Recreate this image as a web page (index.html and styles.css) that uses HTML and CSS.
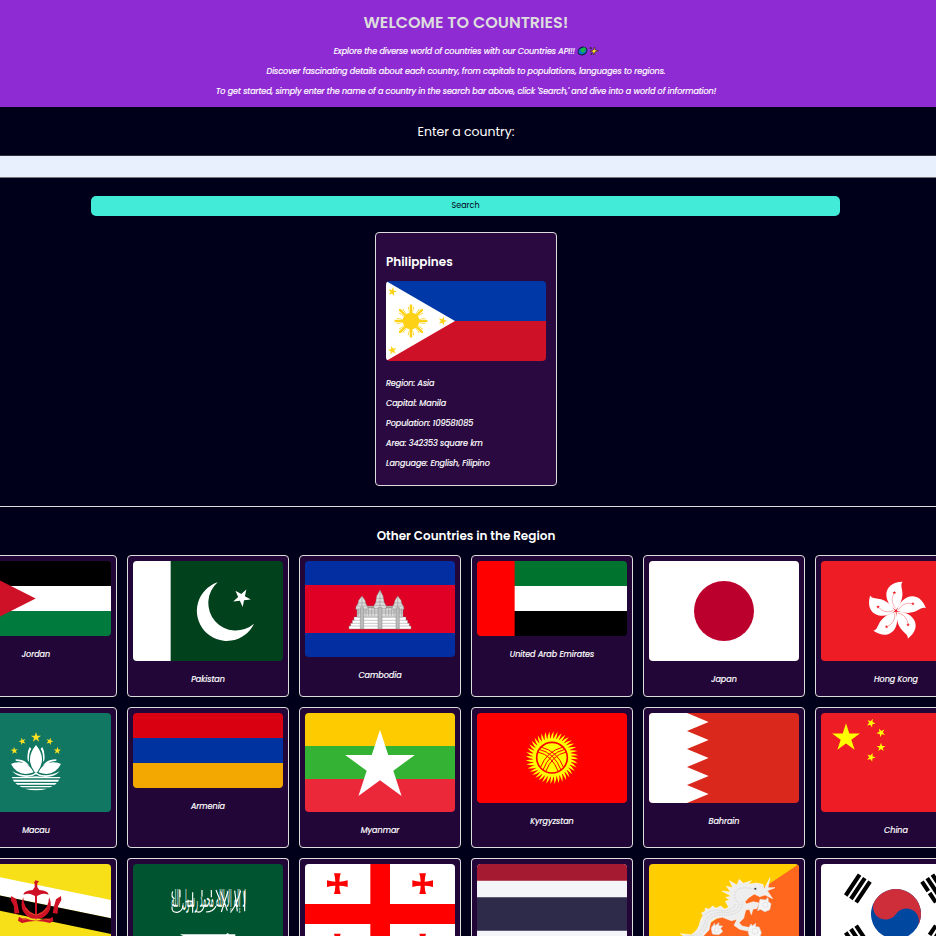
FILE: index.html
```html
<!DOCTYPE html>
<html lang="en">
<head>
<meta charset="utf-8">
<title>Countries</title>
<link rel="stylesheet" href="styles.css">
</head>
<body>
<svg class="defs" width="0" height="0">
  <defs>
    <polygon id="star" points="0,-1 .2245,-.309 .951,-.309 .363,.118 .588,.809 0,.382 -.588,.809 -.363,.118 -.951,-.309 -.2245,-.309"/>
    <g id="phray"><path d="M-3,-22 L-4,-47 L0,-51 L4,-47 L3,-22Z M-5,-22 L-9,-42 L-6.500,-43 L-4,-24Z M5,-22 L9,-42 L6.500,-43 L4,-24Z"/></g>
    <path id="blade" d="M-5,-55 Q-3,-68 5,-79 Q4,-66 3,-55Z"/>
    <g id="blades"><use href="#blade"/><use href="#blade" transform="rotate(9)"/><use href="#blade" transform="rotate(18)"/><use href="#blade" transform="rotate(27)"/></g>
    <g id="petal"><path fill="#fff" d="M0,-3 C-38,-24 -45,-86 20,-88 C6,-72 38,-52 0,-3Z"/><path fill="none" stroke="#ee1c25" stroke-width="1" d="M-1,-8 C-14,-22 -14,-40 -6,-52"/><use href="#star" fill="#ee1c25" transform="translate(-5,-55) scale(6)"/></g>
    <path id="bolnisi" d="M-10,-31 H10 Q6,-18 6,-6 Q18,-6 31,-10 V10 Q18,6 6,6 Q6,18 10,31 H-10 Q-6,18 -6,6 Q-18,6 -31,10 V-10 Q-18,-6 -6,-6 Q-6,-18 -10,-31Z"/>
  </defs>
</svg>
<header class="hero">
  <div class="column">
    <h1>WELCOME TO COUNTRIES!</h1>
    <p class="intro intro-a">Explore the diverse world of countries with our Countries API!!
      <svg class="emoji" viewBox="0 0 22 10"><ellipse cx="5.5" cy="5" rx="4.6" ry="3.7" transform="rotate(-28 5.5 5)" fill="#0979c2" stroke="#15183a"/><path d="M3,4 Q5,1 8,1.6 Q10,3 8,4.5 Q7,7 5,6.5 Q5,5 3,4Z" fill="#18b83c"/><path d="M17.5,1 L18.2,4 L21.3,4.7 L18,6 L16.8,9 L15.8,6 L13.2,5.2 L16.4,4Z" fill="#ffe12e" stroke="#2b1d19" stroke-width=".6"/><path d="M13,1.6 L14.6,2.6 M14,8.4 L15,7.6" stroke="#2b1d19" stroke-width="1.4"/></svg></p>
    <p class="intro intro-b">Discover fascinating details about each country, from capitals to populations, languages to regions.</p>
    <p class="intro intro-c">To get started, simply enter the name of a country in the search bar above, click 'Search,' and dive into a world of information!</p>
  </div>
</header>
<form class="search">
  <label for="country">Enter a country:</label>
  <input id="country" type="text">
  <div class="column"><button type="button">Search</button></div>
</form>
<main>
  <article class="detail">
    <h2>Philippines</h2>
    <svg class="flag" viewBox="48 168 480 240"><path fill="#0038a8" d="M48 168h480v120H48z"/><path fill="#ce1126" d="M48 288h480v120H48z"/><path fill="#fff" d="M48 168 255 288 48 408z"/><g fill="#fcd116"><circle cx="123" cy="288" r="25"/><g transform="translate(123,288)"><use href="#phray"/><use href="#phray" transform="rotate(45)"/><use href="#phray" transform="rotate(90)"/><use href="#phray" transform="rotate(135)"/><use href="#phray" transform="rotate(180)"/><use href="#phray" transform="rotate(225)"/><use href="#phray" transform="rotate(270)"/><use href="#phray" transform="rotate(315)"/></g><use href="#star" transform="translate(67,200) rotate(12) scale(14)"/><use href="#star" transform="translate(218,288) rotate(18) scale(14)"/><use href="#star" transform="translate(67,376) rotate(-12) scale(14)"/></g></svg>
    <p>Region: Asia</p>
    <p>Capital: Manila</p>
    <p>Population: 109581085</p>
    <p>Area: 342353 square km</p>
    <p>Language: English, Filipino</p>
  </article>
  <hr>
  <h2 class="region-title">Other Countries in the Region</h2>
  <section class="grid">
    <article class="card"><svg class="flag" viewBox="-117 198 450 225"><path d="M-117 198h450v75h-450z"/><path fill="#fff" d="M-117 273h450v75h-450z"/><path fill="#007a3d" d="M-117 348h450v75h-450z"/><path fill="#ce1126" d="M-117 198 107 310.500-117 423z"/></svg><p>Jordan</p></article>
    <article class="card"><svg class="flag" viewBox="399 198 450 300"><path fill="#01411c" d="M399 198h450v300H399z"/><path fill="#fff" d="M399 198h113v300H399zM653 262A90 90 0 1 0 762 386A82 82 0 1 1 653 262z"/><use href="#star" fill="#fff" transform="translate(725,308) rotate(-42) scale(28)"/></svg><p>Pakistan</p></article>
    <article class="card"><svg class="flag" viewBox="45 183 450 288"><path fill="#032ea1" d="M45 183h450v288H45z"/><path fill="#e00025" d="M45 255h450v144H45z"/><g stroke="#777" stroke-width="1.200"><path fill="#fff" d="M177 387v-9h5v-8h5v-9h5v-10h156v10h5v9h5v8h5v9z"/><path fill="#ddd" d="M201 351v-28h138v28z"/><path fill="#bbb" d="M232 323v-5h76v5z"/><path fill="#ddd" d="M197 328q-1-10 6-15l3-12 10-13 9 13 3 12q7 5 6 15zM306 328q-1-10 6-15l3-12 8-13 10 13 3 12q7 5 6 15zM251 326q-1-12 6-18l3-20 10-18 9 18 4 20q7 6 6 18z"/><path d="M182 378h176M187 370h166M192 361h156M201 339h138M201 333h138M204 309h23M314 309h22M257 306h26M260 295h19M201 318h30M309 318h32M254 316h32" /><path fill="#bbb" d="M211 323h10v64h-10zM264 323h12v64h-12zM318 323h10v64h-10z"/><path d="M205 325v24M228 325v24M236 325v24M245 325v24M254 325v24M287 325v24M296 325v24M304 325v24M312 325v24M334 325v24M270 274v50M216 291v30M323 291v30"/></g></svg><p>Cambodia</p></article>
    <article class="card"><svg class="flag" viewBox="561 183 450 225"><path fill="#00732f" d="M561 183h450v75H561z"/><path fill="#fff" d="M561 258h450v75H561z"/><path d="M561 333h450v75H561z"/><path fill="red" d="M561 183h113v225H561z"/></svg><p>United Arab Emirates</p></article>
    <article class="card"><svg class="flag" viewBox="39 48 450 300"><path fill="#fff" d="M39 48h450v300H39z"/><circle cx="264" cy="198" r="90" fill="#bc002d"/></svg><p>Japan</p></article>
    <article class="card"><svg class="flag" viewBox="555 48 450 300"><path fill="#ee1c25" d="M555 48h450v300H555z"/><g transform="translate(780,198)"><use href="#petal"/><use href="#petal" transform="rotate(72)"/><use href="#petal" transform="rotate(144)"/><use href="#petal" transform="rotate(216)"/><use href="#petal" transform="rotate(288)"/></g></svg><p>Hong Kong</p></article>

    <article class="card"><svg class="flag" viewBox="-117 39 450 297"><path fill="#117762" d="M-117 39h450v297h-450z"/><g fill="#fbe122"><use href="#star" transform="translate(108,112) scale(16)"/><use href="#star" transform="translate(67,124) rotate(-18) scale(11.500)"/><use href="#star" transform="translate(149,124) rotate(18) scale(11.500)"/><use href="#star" transform="translate(43,152) rotate(-5) scale(11.500)"/><use href="#star" transform="translate(172,152) rotate(5) scale(11.500)"/></g><g fill="#fff"><path d="M108 135Q142 176 112 216H104Q74 176 108 135zM89 141Q80 156 83 181L87 186Q85 160 94 146zM127 141Q136 156 133 181L129 186Q131 160 122 146zM47 178Q66 178 80 188L89 198Q70 184 47 182zM169 178Q150 178 136 188L127 198Q146 184 169 182zM33 192Q45 184 72 188Q92 198 101 217Q55 234 33 192zM183 192Q171 184 144 188Q124 198 115 217Q161 234 183 192zM36 213Q72 233 101 222L108 215L115 222Q144 233 180 213Q160 236 120 229L108 223L96 229Q56 236 36 213z"/><path d="M36 231H88L108 229L128 231H181L180 235H37zM39 239H177L174 245H42zM46 249H170L165 254H52zM58 258H158L150 262H66zM74 266H142Q108 276 74 266z"/></g></svg><p>Macau</p></article>
    <article class="card"><svg class="flag" viewBox="399 39 450 225"><path fill="#d90012" d="M399 39h450v75H399z"/><path fill="#0033a0" d="M399 114h450v75H399z"/><path fill="#f2a800" d="M399 189h450v75H399z"/></svg><p>Armenia</p></article>
    <article class="card"><svg class="flag" viewBox="45 39 450 297"><path fill="#fecb00" d="M45 39h450v99H45z"/><path fill="#34b233" d="M45 138h450v99H45z"/><path fill="#ea2839" d="M45 237h450v99H45z"/><use href="#star" fill="#fff" transform="translate(270,199) scale(110)"/></svg><p>Myanmar</p></article>
    <article class="card"><svg class="flag" viewBox="561 39 450 270"><path fill="red" d="M561 39h450v270H561z"/><g transform="translate(786,173)"><g fill="#ff0"><circle r="58"/><use href="#blades"/><use href="#blades" transform="rotate(36)"/><use href="#blades" transform="rotate(72)"/><use href="#blades" transform="rotate(108)"/><use href="#blades" transform="rotate(144)"/><use href="#blades" transform="rotate(180)"/><use href="#blades" transform="rotate(216)"/><use href="#blades" transform="rotate(252)"/><use href="#blades" transform="rotate(288)"/><use href="#blades" transform="rotate(324)"/></g><g fill="none" stroke="red"><circle r="46" stroke-width="5"/><path stroke-width="3" d="M-35,30Q-16,-20 34,-32M-27,37Q-8,-14 39,-25M-19,42Q0,-8 43,-17M35,30Q16,-20 -34,-32M27,37Q8,-14 -39,-25M19,42Q0,-8 -43,-17"/></g></g></svg><p>Kyrgyzstan</p></article>
    <article class="card"><svg class="flag" viewBox="39 39 450 270"><path fill="#da291c" d="M39 39h450v270H39z"/><path fill="#fff" d="M39 39H153L218 66 153 93 218 120 153 147 218 174 153 201 218 228 153 255 218 282 153 309H39z"/></svg><p>Bahrain</p></article>
    <article class="card"><svg class="flag" viewBox="555 39 450 297"><path fill="#ee1c25" d="M555 39h450v297H555z"/><g fill="#ff0"><use href="#star" transform="translate(630,114) scale(44)"/><use href="#star" transform="translate(705,69) rotate(23) scale(14)"/><use href="#star" transform="translate(735,98) rotate(46) scale(14)"/><use href="#star" transform="translate(735,142) scale(14)"/><use href="#star" transform="translate(705,172) rotate(21) scale(14)"/></g></svg><p>China</p></article>

    <article class="card"><svg class="flag" viewBox="-117 492 450 225"><path fill="#f7e017" d="M-117 492h450v225h-450z"/><path fill="#fff" d="M-117 508 333 600V655L-117 562z"/><path d="M-117 562 333 655V702L-117 608z"/><g fill="#cf1126"><path d="M106 541l11 3-5 6v12l6 8q26 2 28 14-16-5-27 0l-8 4v70h-6v-70l-8-4q-12-5-27 0 2-12 28-14l6-8v-12l-2-2z"/><path d="M70 592A44 44 0 1 0 147 592A50 50 0 0 1 117 640Q108 648 99 640A50 50 0 0 1 70 592zM34 588l15 10 5 21 4 20-15 2-1-22-10-19zM183 588l-15 10-6 21-4 20 15 2 1-22 10-19zM57 650q10 8 20 5 30 14 62 0 10 3 19-5l2 13-10 6q-42-12-84 0l-12-7z"/></g><path fill="none" stroke="#f7c12a" stroke-width="1" d="M75 625q32 40 66 0M66 660q42-10 84 0"/></svg></article>
    <article class="card"><svg class="flag" viewBox="399 492 450 300"><path fill="#00542f" d="M399 492h450v300H399z"/><text class="shahada" textLength="224" lengthAdjust="spacingAndGlyphs" transform="translate(626,622) scale(1,2.700)" text-anchor="middle" fill="#fff">لا إله إلا الله محمد رسول الله</text><path fill="none" stroke="#fff" stroke-width="3.500" d="M516 620Q514 638 532 637 548 634 549 616M556 606Q574 600 580 608M578 577V638M586 634Q606 642 612 620M618 636Q640 636 648 618M662 574 682 632M684 574 664 636M704 572 712 634M722 572Q712 610 694 634M734 572V634M518 574Q512 592 524 596M540 570V592M606 570V590M634 570V592M648 570 660 600"/><path fill="#fff" d="M540 703H678L683 699 688 703H706V709H688L683 714 678 709H560Q547 709 540 703z"/></svg></article>
    <article class="card"><svg class="flag" viewBox="45 492 450 300"><path fill="#fff" d="M45 492h450v300H45z"/><g fill="red"><path d="M241 492h59v120h195v60H300v120h-59V672H45v-60h196z"/><use href="#bolnisi" x="142" y="551"/><use href="#bolnisi" x="398" y="551"/><use href="#bolnisi" x="142" y="732"/><use href="#bolnisi" x="398" y="732"/></g></svg></article>
    <article class="card"><svg class="flag" viewBox="561 492 450 300"><path fill="#f4f5f8" d="M561 492h450v300H561z"/><path fill="#a51931" d="M561 492h450v50H561zM561 742h450v50H561z"/><path fill="#2d2a4a" d="M561 592h450v100H561z"/></svg></article>
    <article class="card"><svg class="flag" viewBox="39 492 450 300"><path fill="#ffcd00" d="M39 492h450v300H39z"/><path fill="#ff671f" d="M489 492v300H39z"/><path fill="#eee" stroke="#fff" stroke-width="1.500" d="M133 701L166 704Q188 692 194 660L201 645 196 639 207 634 208 624 219 628 230 618 240 625 254 618 266 627 278 622 268 604 281 600 269 592 286 589 258 573 284 576 271 559 291 563 280 542 303 555 310 538 322 550 346 542 337 553 360 549 381 553 384 568 402 533 396 563 417 563 394 572 410 596 387 585 371 590 355 582 338 593 327 605 331 612 352 605 369 609 362 626 351 627 346 644 340 628 329 630 323 655 309 668 318 678 346 684 340 694 311 688 294 676 303 658 286 662 260 652 241 655 224 666 219 690 202 708 165 722z"/><g fill="#f6f6f6" stroke="#ddd" stroke-width="2"><path d="M372 598l16 2 8-7 1 12 8 6-4 18-14 6-14-7-8 4 2-12zM226 684l10-14 1 8 12-10-1 9 12 1-6 7 6 10-12 9-19-2zM337 686l8-14 4 6 10-8-1 10 11 1 7 17-6 16h-28l-5-16z"/><circle cx="388" cy="615" r="8"/><circle cx="357" cy="694" r="9"/><circle cx="242" cy="690" r="7"/></g><path fill="none" stroke="#bbb" stroke-width="2" stroke-dasharray="2 3" d="M151 707Q195 710 207 665 218 638 260 637 310 640 309 610 285 590 305 568 325 558 365 570M165 711Q205 712 215 665 230 642 265 645 322 645 319 605M199 650Q225 625 255 632 295 633 298 610"/><circle cx="358" cy="566" r="3" fill="#333"/></svg></article>
    <article class="card"><svg class="flag" viewBox="555 492 450 300"><path fill="#fff" d="M555 492h450v300H555z"/><g transform="translate(780,642) rotate(33.690)"><circle r="75" fill="#0047a0"/><path fill="#cd2e3a" d="M-75,0A75,75 0 0 1 75,0A37.500,37.500 0 0 0 0,0A37.500,37.500 0 0 1 -75,0z"/><path d="M-162.500-37.500h12.500v75h-12.500zM-143.750-37.500h12.500v75h-12.500zM-125-37.500h12.500v75h-12.500zM112.500-37.500h12.500v34h-12.500zM112.500 3.500h12.500v34h-12.500zM131.250-37.500h12.500v34h-12.500zM131.250 3.500h12.500v34h-12.500zM150-37.500h12.500v34h-12.500zM150 3.500h12.500v34h-12.500z"/></g><g transform="translate(780,642) rotate(-33.690)"><path d="M-162.500-37.500h12.500v75h-12.500zM-143.750-37.500h12.500v34h-12.500zM-143.750 3.500h12.500v34h-12.500zM-125-37.500h12.500v75h-12.500zM112.500-37.500h12.500v34h-12.500zM112.500 3.500h12.500v34h-12.500zM131.250-37.500h12.500v75h-12.500zM150-37.500h12.500v34h-12.500zM150 3.500h12.500v34h-12.500z"/></g></svg></article>
  </section>
</main>
</body>
</html>
```
FILE: styles.css
```css
* { box-sizing: border-box; }

html, body { height: 936px; overflow: hidden; }

body {
  display: flex;
  flex-direction: column;
  margin: 0;
  background: #01001a;
  color: #fff;
  font-family: Poppins, Inter, "Open Sans", sans-serif;
  font-size: 8px;
  line-height: 12px;
}

.defs { position: absolute; }

h1, h2, p { margin: 0; }

.column, main { width: 932px; }

.hero {
  flex: none;
  height: 107px;
  padding-top: 11px;
  background: #8f2bd3;
  text-align: center;
}

h1 {
  margin-bottom: 11px;
  color: #ddd;
  font-size: 16px;
  font-weight: 600;
  line-height: 24px;
}

p { font-style: italic; -webkit-text-stroke: .2px currentColor; }

.intro { margin-bottom: 8px; white-space: nowrap; }

.intro-a { letter-spacing: -.045px; }
.intro-b { letter-spacing: -.03px; }
.intro-c { letter-spacing: -.045px; }

.emoji { width: 22px; height: 10px; margin-right: -1px; vertical-align: -2px; }

.search { display: flex; flex: none; flex-direction: column; }

label {
  width: 932px;
  margin-top: 15px;
  font-size: 12.5px;
  line-height: 19px;
  text-align: center;
}

input {
  height: 23px;
  margin: 14px -4px 0;
  padding: 0;
  border: 1px solid #767676;
  border-top-color: #32303a;
  border-radius: 0;
  background: #e8effd;
}

button {
  display: block;
  width: 749px;
  height: 20px;
  margin: 18px 0 0 91px;
  padding: 0 0 1px;
  border: 0;
  border-radius: 5px;
  background: #42ebd7;
  color: #01001a;
  font: inherit;
}

main {
  display: flex;
  flex: 1;
  flex-direction: column;
  min-height: 0;
  padding-top: 16px;
}

main > * { flex: none; }

.detail {
  width: 182px;
  height: 254px;
  margin: 0 auto;
  padding: 20px 10px 0;
  border: 1px solid #ddd;
  border-radius: 4px;
  background: #29093f;
}

h2 { font-size: 12px; font-weight: 600; line-height: 18px; }

.flag { display: block; width: 100%; border-radius: 4px; }

.detail .flag { margin: 10px 0 17px; }

.detail p { margin-bottom: 8px; }

hr { width: 936px; height: 1px; margin: 20px 0; border: 0; background: #ddd; }

.region-title { text-align: center; }

.grid {
  display: grid;
  flex: 1;
  grid-template-columns: repeat(6, 162px);
  grid-template-rows: 142px 141px 78px;
  gap: 10px;
  justify-content: center;
  min-height: 0;
  margin-top: 10px;
}

.card {
  padding: 5px;
  border: 1px solid #ddd;
  border-radius: 4px;
  background: #220637;
  text-align: center;
}

/* The third row is cut by the bottom of the window. */
.card:nth-child(n + 13) {
  overflow: hidden;
  border-bottom: 0;
  border-radius: 4px 4px 0 0;
}

.card p { margin-top: 13px; }

.shahada { font-family: "DejaVu Sans", sans-serif; font-size: 26px; }
```
